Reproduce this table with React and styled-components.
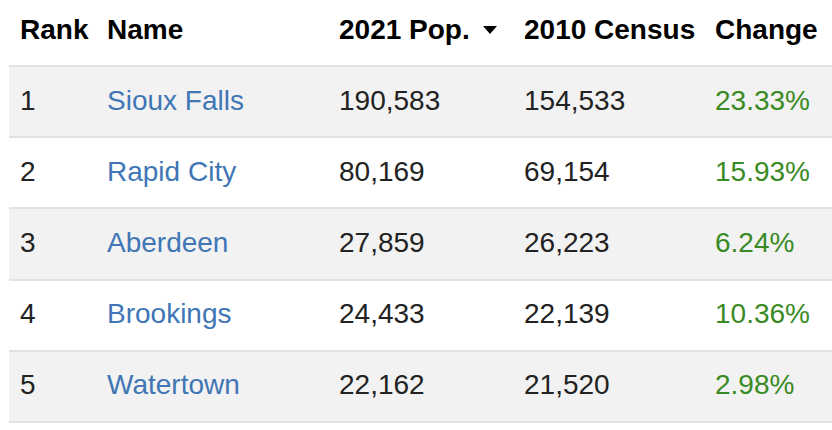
import React from "react";
import styled, { createGlobalStyle } from "styled-components";

const GlobalStyle = createGlobalStyle`
  html, body {
    margin: 0;
    padding: 0;
    background: #ffffff;
  }
  body {
    font-family: "Liberation Sans", Arial, Helvetica, sans-serif;
    color: #222222;
  }
`;

const Wrapper = styled.div`
  padding-left: 9px;
  width: 823px;
`;

const Table = styled.table`
  width: 100%;
  border-collapse: collapse;
  table-layout: fixed;
  font-size: 28px;
  line-height: 32px;
`;

const HeadCell = styled.th`
  text-align: left;
  font-weight: 700;
  color: #000000;
  box-sizing: border-box;
  height: 66px;
  padding: 0 0 6px 11px;
  vertical-align: middle;
  white-space: nowrap;
  border-bottom: 2px solid #dee2e6;
`;

const Row = styled.tr`
  background: ${(p) => (p.$striped ? "#f2f2f2" : "#ffffff")};
  border-bottom: 2px solid #dee2e6;
`;

const Cell = styled.td`
  box-sizing: border-box;
  height: 71.2px;
  padding: 0 0 2px 11px;
  vertical-align: middle;
  white-space: nowrap;
  color: #222222;
`;

const NameLink = styled.a`
  color: #4076b5;
  text-decoration: none;
`;

const Change = styled.span`
  color: #3a8a24;
`;

const Caret = styled.span`
  display: inline-block;
  width: 0;
  height: 0;
  margin-left: 13px;
  vertical-align: middle;
  position: relative;
  top: -1px;
  border-left: 7px solid transparent;
  border-right: 7px solid transparent;
  border-top: 8px solid #000000;
`;

const rows = [
  { rank: 1, name: "Sioux Falls", pop: "190,583", census: "154,533", change: "23.33%" },
  { rank: 2, name: "Rapid City", pop: "80,169", census: "69,154", change: "15.93%" },
  { rank: 3, name: "Aberdeen", pop: "27,859", census: "26,223", change: "6.24%" },
  { rank: 4, name: "Brookings", pop: "24,433", census: "22,139", change: "10.36%" },
  { rank: 5, name: "Watertown", pop: "22,162", census: "21,520", change: "2.98%" },
];

export default function App() {
  return (
    <>
      <GlobalStyle />
      <Wrapper>
        <Table>
          <colgroup>
            <col style={{ width: 87 }} />
            <col style={{ width: 232 }} />
            <col style={{ width: 185 }} />
            <col style={{ width: 191 }} />
            <col />
          </colgroup>
          <thead>
            <tr>
              <HeadCell>Rank</HeadCell>
              <HeadCell>Name</HeadCell>
              <HeadCell>
                2021 Pop.
                <Caret />
              </HeadCell>
              <HeadCell>2010 Census</HeadCell>
              <HeadCell>Change</HeadCell>
            </tr>
          </thead>
          <tbody>
            {rows.map((r, i) => (
              <Row key={r.rank} $striped={i % 2 === 0}>
                <Cell>{r.rank}</Cell>
                <Cell>
                  <NameLink href="#">{r.name}</NameLink>
                </Cell>
                <Cell>{r.pop}</Cell>
                <Cell>{r.census}</Cell>
                <Cell>
                  <Change>{r.change}</Change>
                </Cell>
              </Row>
            ))}
          </tbody>
        </Table>
      </Wrapper>
    </>
  );
}
